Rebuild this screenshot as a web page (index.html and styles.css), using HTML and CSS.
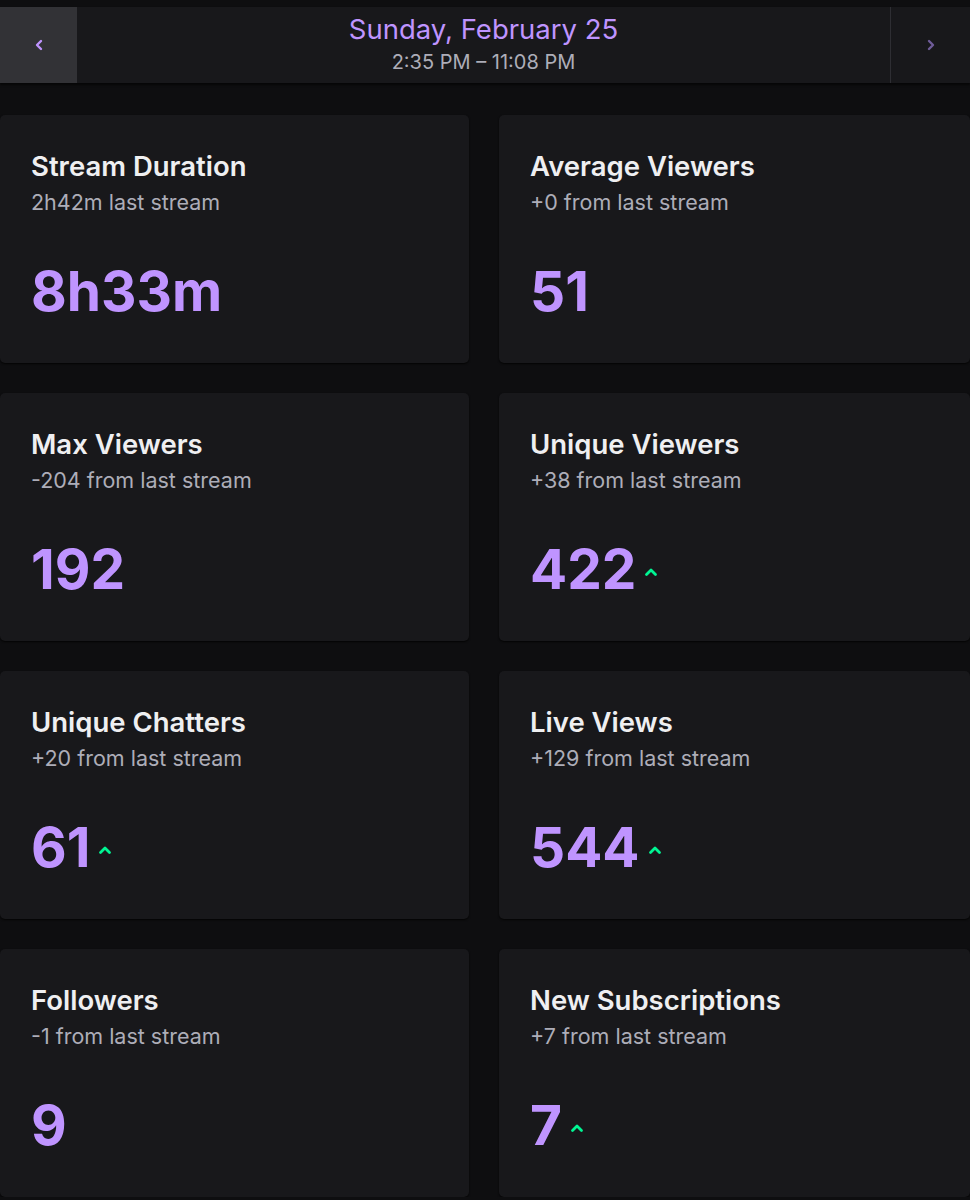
FILE: index.html
```html
<!DOCTYPE html>
<html lang="en">
<head>
    <meta charset="UTF-8">
    <meta name="viewport" content="width=device-width, initial-scale=1.0">
    <title>Stream Summary</title>
    <link rel="stylesheet" href="styles.css">
</head>
<body>
    <header class="date-bar">
        <button class="nav-btn nav-prev" type="button" aria-label="Previous stream">
            <svg width="10" height="12" viewBox="0 0 10 12"><path d="M7 2 L3 6 L7 10" fill="none" stroke="currentColor" stroke-width="2.4" stroke-linecap="round" stroke-linejoin="round"/></svg>
        </button>
        <div class="date-info">
            <div class="date-title">Sunday, February 25</div>
            <div class="date-time">2:35 PM &ndash; 11:08 PM</div>
        </div>
        <button class="nav-btn nav-next" type="button" aria-label="Next stream" disabled>
            <svg width="10" height="12" viewBox="0 0 10 12"><path d="M3 2 L7 6 L3 10" fill="none" stroke="currentColor" stroke-width="2.4" stroke-linecap="round" stroke-linejoin="round"/></svg>
        </button>
    </header>

    <main class="stats">
        <div class="card">
            <h2>Stream Duration</h2>
            <p class="sub">2h42m last stream</p>
            <div class="value">8h33m</div>
        </div>
        <div class="card">
            <h2>Average Viewers</h2>
            <p class="sub">+0 from last stream</p>
            <div class="value">51</div>
        </div>
        <div class="card">
            <h2>Max Viewers</h2>
            <p class="sub">-204 from last stream</p>
            <div class="value">192</div>
        </div>
        <div class="card">
            <h2>Unique Viewers</h2>
            <p class="sub">+38 from last stream</p>
            <div class="value">422 <span class="up"><svg width="14" height="10" viewBox="0 0 14 10"><path d="M2.5 7.5 L7 3 L11.5 7.5" fill="none" stroke="currentColor" stroke-width="2.8" stroke-linecap="round" stroke-linejoin="round"/></svg></span></div>
        </div>
        <div class="card">
            <h2>Unique Chatters</h2>
            <p class="sub">+20 from last stream</p>
            <div class="value">61 <span class="up"><svg width="14" height="10" viewBox="0 0 14 10"><path d="M2.5 7.5 L7 3 L11.5 7.5" fill="none" stroke="currentColor" stroke-width="2.8" stroke-linecap="round" stroke-linejoin="round"/></svg></span></div>
        </div>
        <div class="card">
            <h2>Live Views</h2>
            <p class="sub">+129 from last stream</p>
            <div class="value">544 <span class="up"><svg width="14" height="10" viewBox="0 0 14 10"><path d="M2.5 7.5 L7 3 L11.5 7.5" fill="none" stroke="currentColor" stroke-width="2.8" stroke-linecap="round" stroke-linejoin="round"/></svg></span></div>
        </div>
        <div class="card">
            <h2>Followers</h2>
            <p class="sub">-1 from last stream</p>
            <div class="value">9</div>
        </div>
        <div class="card">
            <h2>New Subscriptions</h2>
            <p class="sub">+7 from last stream</p>
            <div class="value">7 <span class="up"><svg width="14" height="10" viewBox="0 0 14 10"><path d="M2.5 7.5 L7 3 L11.5 7.5" fill="none" stroke="currentColor" stroke-width="2.8" stroke-linecap="round" stroke-linejoin="round"/></svg></span></div>
        </div>
    </main>
</body>
</html>
```

FILE: styles.css
```css
body {
    margin: 0;
    padding: 7px 0 0 0;
    background-color: #0e0e10;
    font-family: Inter, "Noto Sans", sans-serif;
    color: #efeff1;
}

/* top bar with the stream date */
.date-bar {
    display: flex;
    height: 76px;
    background-color: #18181b;
    box-shadow: 0 2px 2px rgba(0, 0, 0, 0.6);
}

.nav-btn {
    width: 77px;
    border: none;
    padding: 0;
    display: flex;
    align-items: center;
    justify-content: center;
    color: #bf94ff;
    background-color: #323236;
    cursor: pointer;
}

.nav-next {
    width: 80px;
    background-color: #18181b;
    border-left: 1px solid #2e2e33;
    color: #6f5c99;
    cursor: default;
}

.date-info {
    flex: 1;
    display: flex;
    flex-direction: column;
    align-items: center;
    padding-top: 5px;
    gap: 4px;
}

.date-title {
    font-size: 27.5px;
    color: #bf94ff;
    line-height: 34px;
}

.date-time {
    font-size: 20px;
    color: #adadb8;
    line-height: 24px;
}

/* stat cards */
.stats {
    display: grid;
    grid-template-columns: 469px 471px;
    column-gap: 30px;
    row-gap: 30px;
    margin-top: 32px;
}

.card {
    height: 248px;
    box-sizing: border-box;
    padding: 34px 31px 0 31px;
    background-color: #18181b;
    border-radius: 5px;
    box-shadow: 0 1px 2px rgba(0, 0, 0, 0.8);
}

.card h2 {
    margin: 0;
    font-size: 27.5px;
    font-weight: 600;
    line-height: 34px;
    color: #efeff1;
}

.card .sub {
    margin: 5px 0 0 0;
    font-size: 21.5px;
    line-height: 28px;
    color: #adadb8;
}

.card .value {
    margin-top: 40px;
    display: flex;
    align-items: center;
    gap: 8px;
    font-size: 55px;
    font-weight: 700;
    line-height: 70px;
    color: #bf94ff;
}

.up {
    display: flex;
    margin-top: 5px;
    color: #00f593;
}
```
